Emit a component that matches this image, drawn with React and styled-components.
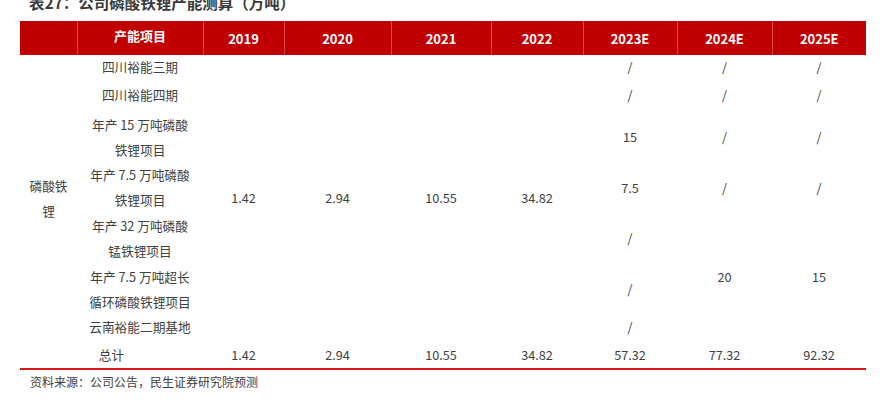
import React from "react";
import styled, { createGlobalStyle } from "styled-components";

const Global = createGlobalStyle`
  html, body { margin: 0; padding: 0; background: #fff; }
  body { font-family: "Noto Sans CJK SC", "Noto Sans", sans-serif; color: #404040; overflow: hidden; }
`;

const Page = styled.div`
  width: 884px;
  height: 406px;
  padding: 0 18px 0 20px;
  box-sizing: border-box;
  display: flex;
  flex-direction: column;
`;

const Title = styled.div`
  margin-top: -8px;
  height: 21px;
  padding-left: 9px;
  margin-bottom: 8px;
  font-size: 15.5px;
  line-height: 21px;
  font-weight: 700;
  color: #3a3a3a;
  white-space: nowrap;
`;

const Table = styled.table`
  width: 846px;
  border-collapse: collapse;
  table-layout: fixed;
  font-size: 12.7px;
  line-height: 25px;
`;

const HeadCell = styled.th`
  background: #c00000;
  color: #fff;
  font-weight: 700;
  font-size: 13px;
  height: 34px;
  padding: 0 0 ${(p) => (p.$raise ? "6px" : "0")} 0;
  text-align: center;
  vertical-align: middle;
  border-left: ${(p) => (p.$first ? "none" : "1px solid #d84a4a")};
  box-sizing: border-box;
`;

const Row = styled.tr`
  height: ${(p) => p.$h}px;
`;

const Cell = styled.td`
  padding: 0 0 ${(p) => p.$lift || 0}px 0;
  line-height: ${(p) => (p.$lift ? "20px" : "25px")};
  text-align: center;
  vertical-align: middle;
  color: #404040;
  white-space: nowrap;
  ${(p) => (p.$total ? "border-bottom: 2px solid #d61a1a;" : "")}
`;

const Source = styled.div`
  padding-left: 10px;
  margin-top: 2px;
  font-size: 12px;
  line-height: 20px;
  color: #404040;
`;

const widths = [57, 126, 81, 107, 100, 92, 94, 95, 94];
const years = ["2019", "2020", "2021", "2022", "2023E", "2024E", "2025E"];

const projects = [
  { name: ["四川裕能三期"], h: 28, lift: 4, v23: "/", v24: "/", v25: "/" },
  { name: ["四川裕能四期"], h: 28, lift: 4, v23: "/", v24: "/", v25: "/" },
  { name: ["年产 15 万吨磷酸", "铁锂项目"], h: 51, v23: "15", v24: "/", v25: "/" },
  { name: ["年产 7.5 万吨磷酸", "铁锂项目"], h: 50, v23: "7.5", v24: "/", v25: "/" },
  { name: ["年产 32 万吨磷酸", "锰铁锂项目"], h: 51, v23: "/", merged: { v24: "20", v25: "15" } },
  { name: ["年产 7.5 万吨超长", "循环磷酸铁锂项目"], h: 51, v23: "/" },
  { name: ["云南裕能二期基地"], h: 26, lift: 1, v23: "/" },
];

const history = ["1.42", "2.94", "10.55", "34.82"];
const totals = ["1.42", "2.94", "10.55", "34.82", "57.32", "77.32", "92.32"];

const Lines = ({ lines }) =>
  lines.map((l, i) => (
    <React.Fragment key={i}>
      {i > 0 && <br />}
      {l}
    </React.Fragment>
  ));

export default function App() {
  return (
    <>
      <Global />
      <Page>
        <Title>表27：公司磷酸铁锂产能测算（万吨）</Title>
        <Table>
          <colgroup>
            {widths.map((w, i) => (
              <col key={i} style={{ width: w }} />
            ))}
          </colgroup>
          <thead>
            <tr>
              <HeadCell $first />
              <HeadCell $raise>产能项目</HeadCell>
              {years.map((y) => (
                <HeadCell key={y}>{y}</HeadCell>
              ))}
            </tr>
          </thead>
          <tbody>
            {projects.map((p, i) => (
              <Row key={i} $h={p.h}>
                {i === 0 && (
                  <Cell rowSpan={projects.length}>
                    磷酸铁
                    <br />锂
                  </Cell>
                )}
                <Cell $lift={p.lift}>
                  <Lines lines={p.name} />
                </Cell>
                {i === 0 &&
                  history.map((v) => (
                    <Cell key={v} rowSpan={projects.length}>
                      {v}
                    </Cell>
                  ))}
                <Cell $lift={p.lift}>{p.v23}</Cell>
                {p.v24 && <Cell $lift={p.lift}>{p.v24}</Cell>}
                {p.v25 && <Cell $lift={p.lift}>{p.v25}</Cell>}
                {p.merged && (
                  <>
                    <Cell rowSpan={3}>{p.merged.v24}</Cell>
                    <Cell rowSpan={3}>{p.merged.v25}</Cell>
                  </>
                )}
              </Row>
            ))}
            <Row $h={29}>
              <Cell $total colSpan={2}>总计</Cell>
              {totals.map((v) => (
                <Cell $total key={v}>
                  {v}
                </Cell>
              ))}
            </Row>
          </tbody>
        </Table>
        <Source>资料来源：公司公告，民生证券研究院预测</Source>
      </Page>
    </>
  );
}
